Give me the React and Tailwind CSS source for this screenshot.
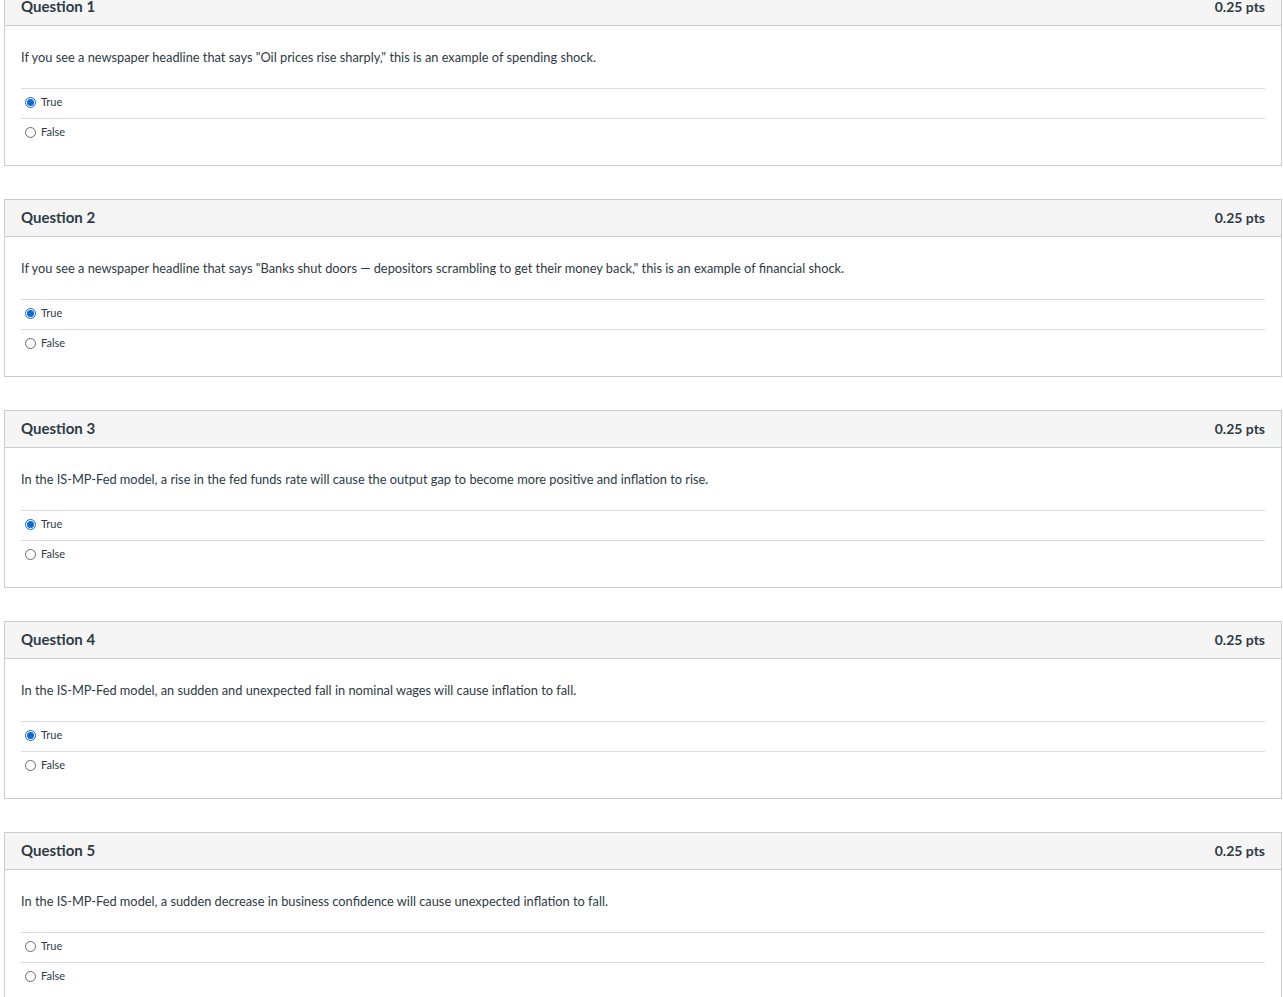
import React from 'react';

const questions = [
  {
    n: 1,
    text: 'If you see a newspaper headline that says "Oil prices rise sharply," this is an example of spending shock.',
    picked: 'True',
  },
  {
    n: 2,
    text: 'If you see a newspaper headline that says "Banks shut doors \u2014 depositors scrambling to get their money back," this is an example of financial shock.',
    picked: 'True',
  },
  {
    n: 3,
    text: 'In the IS-MP-Fed model, a rise in the fed funds rate will cause the output gap to become more positive and inflation to rise.',
    picked: 'True',
  },
  {
    n: 4,
    text: 'In the IS-MP-Fed model, an sudden and unexpected fall in nominal wages will cause inflation to fall.',
    picked: 'True',
  },
  {
    n: 5,
    text: 'In the IS-MP-Fed model, a sudden decrease in business confidence will cause unexpected inflation to fall.',
    picked: null,
  },
];

function Radio({ on }) {
  if (on) {
    return (
      <span className="w-[11px] h-[11px] rounded-full border border-[#0b6bd3] flex items-center justify-center shrink-0">
        <span className="w-[7px] h-[7px] rounded-full bg-[#0b6bd3]"></span>
      </span>
    );
  }
  return <span className="w-[11px] h-[11px] rounded-full border border-[#6b6b6b] shrink-0"></span>;
}

function Question({ q }) {
  return (
    <div className="ml-[4px] mr-[1px] border border-[#c7cdd1] bg-white">
      <div className="h-[37px] bg-[#f5f5f5] border-b border-[#c7cdd1] px-[16px] pb-[2px] flex items-center justify-between">
        <span className="text-[15px] font-bold text-[#2d3b45]">Question {q.n}</span>
        <span className="text-[14px] font-bold text-[#2d3b45]">0.25 pts</span>
      </div>
      <div className="px-[16px] pt-[21px] pb-[17px]">
        <p className="text-[12.8px] leading-[20px] text-[#2d3b45]">{q.text}</p>
        <div className="mt-[21px]">
          {['True', 'False'].map((opt) => (
            <div key={opt} className="h-[30px] border-t border-[#dddddd] flex items-center gap-[5px] pl-[4px] pb-[3px]">
              <Radio on={q.picked === opt} />
              <span className="text-[11px] text-[#2d3b45]">{opt}</span>
            </div>
          ))}
        </div>
      </div>
    </div>
  );
}

export default function App() {
  return (
    <div className="bg-white min-h-screen overflow-hidden" style={{ fontFamily: 'Lato, "Noto Sans", sans-serif' }}>
      <div className="mt-[-12px] flex flex-col gap-[33px]">
        {questions.map((q) => (
          <Question key={q.n} q={q} />
        ))}
      </div>
    </div>
  );
}
